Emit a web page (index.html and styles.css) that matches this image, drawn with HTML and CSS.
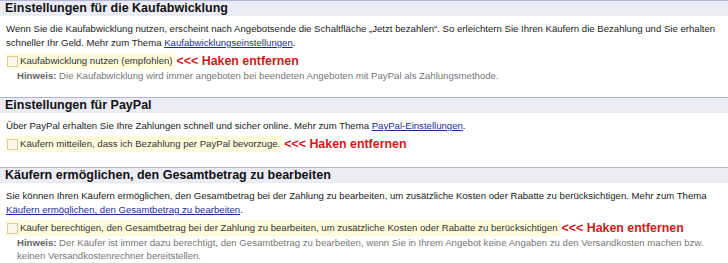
FILE: index.html
```html
<!DOCTYPE html>
<html lang="de">
<head>
<meta charset="utf-8">
<link rel="stylesheet" href="styles.css">
</head>
<body>
<section class="sec">
  <h2 class="head">Einstellungen für die Kaufabwicklung</h2>
  <p class="desc">Wenn Sie die Kaufabwicklung nutzen, erscheint nach Angebotsende die Schaltfläche „Jetzt bezahlen“. So erleichtern Sie Ihren Käufern die Bezahlung und Sie erhalten schneller Ihr Geld. Mehr zum Thema <a href="#">Kaufabwicklungseinstellungen</a>.</p>
  <div class="opt">
    <div class="row"><label class="lbl"><span class="box"></span>Kaufabwicklung nutzen (empfohlen)</label><span class="warn">&lt;&lt;&lt; Haken entfernen</span></div>
    <p class="hint"><b>Hinweis:</b> Die Kaufabwicklung wird immer angeboten bei beendeten Angeboten mit PayPal als Zahlungsmethode.</p>
  </div>
</section>
<section class="sec">
  <h2 class="head">Einstellungen für PayPal</h2>
  <p class="desc">Über PayPal erhalten Sie Ihre Zahlungen schnell und sicher online. Mehr zum Thema <a href="#">PayPal-Einstellungen</a>.</p>
  <div class="opt">
    <div class="row"><label class="lbl"><span class="box"></span>Käufern mitteilen, dass ich Bezahlung per PayPal bevorzuge.</label><span class="warn">&lt;&lt;&lt; Haken entfernen</span></div>
  </div>
</section>
<section class="sec">
  <h2 class="head">Käufern ermöglichen, den Gesamtbetrag zu bearbeiten</h2>
  <p class="desc">Sie können Ihren Käufern ermöglichen, den Gesamtbetrag bei der Zahlung zu bearbeiten, um zusätzliche Kosten oder Rabatte zu berücksichtigen. Mehr zum Thema <a href="#">Käufern ermöglichen, den Gesamtbetrag zu bearbeiten</a>.</p>
  <div class="opt">
    <div class="row"><label class="lbl"><span class="box"></span>Käufer berechtigen, den Gesamtbetrag bei der Zahlung zu bearbeiten, um zusätzliche Kosten oder Rabatte zu berücksichtigen</label><span class="warn">&lt;&lt;&lt; Haken entfernen</span></div>
    <p class="hint"><b>Hinweis:</b> Der Käufer ist immer dazu berechtigt, den Gesamtbetrag zu bearbeiten, wenn Sie in Ihrem Angebot keine Angaben zu den Versandkosten machen bzw. keinen Versandkostenrechner bereitstellen.</p>
  </div>
</section>
</body>
</html>
```

FILE: styles.css
```css
html, body {
  margin: 0;
  padding: 0;
  background: #fff;
}
body {
  font-family: "Liberation Sans", Arial, sans-serif;
  font-size: 9.6px;
  color: #222;
  overflow: hidden;
}
.sec {
  display: flex;
  flex-direction: column;
  margin-bottom: 15px;
}
.sec:last-child {
  margin-bottom: 0;
}
.head {
  margin: 0;
  border-top: 1px solid #b4b4d6;
  background: #ececf6;
  font-size: 12.5px;
  font-weight: bold;
  color: #111;
  line-height: 15px;
  padding: 0 5px;
}
.desc {
  margin: 6px 0 0;
  padding: 0 8px 0 6px;
  line-height: 14px;
}
.desc a {
  color: #1b2f8f;
}
.opt {
  padding: 3px 5px 0;
}
.row {
  display: flex;
  align-items: center;
  gap: 2px;
  line-height: 14px;
}
.lbl {
  display: flex;
  align-items: center;
  background: #fffbdc;
  padding: 1px 2px;
  color: #333;
}
.box {
  width: 9px;
  height: 9px;
  border: 1px solid #d8cfa8;
  background: #fbf7e6;
  margin-right: 2px;
}
.warn {
  color: #d01a1a;
  font-weight: bold;
  font-size: 12.4px;
}
.hint {
  margin: 0;
  padding: 0 10px 0 12px;
  color: #777;
  line-height: 13px;
}
.hint b {
  color: #666;
}
```
